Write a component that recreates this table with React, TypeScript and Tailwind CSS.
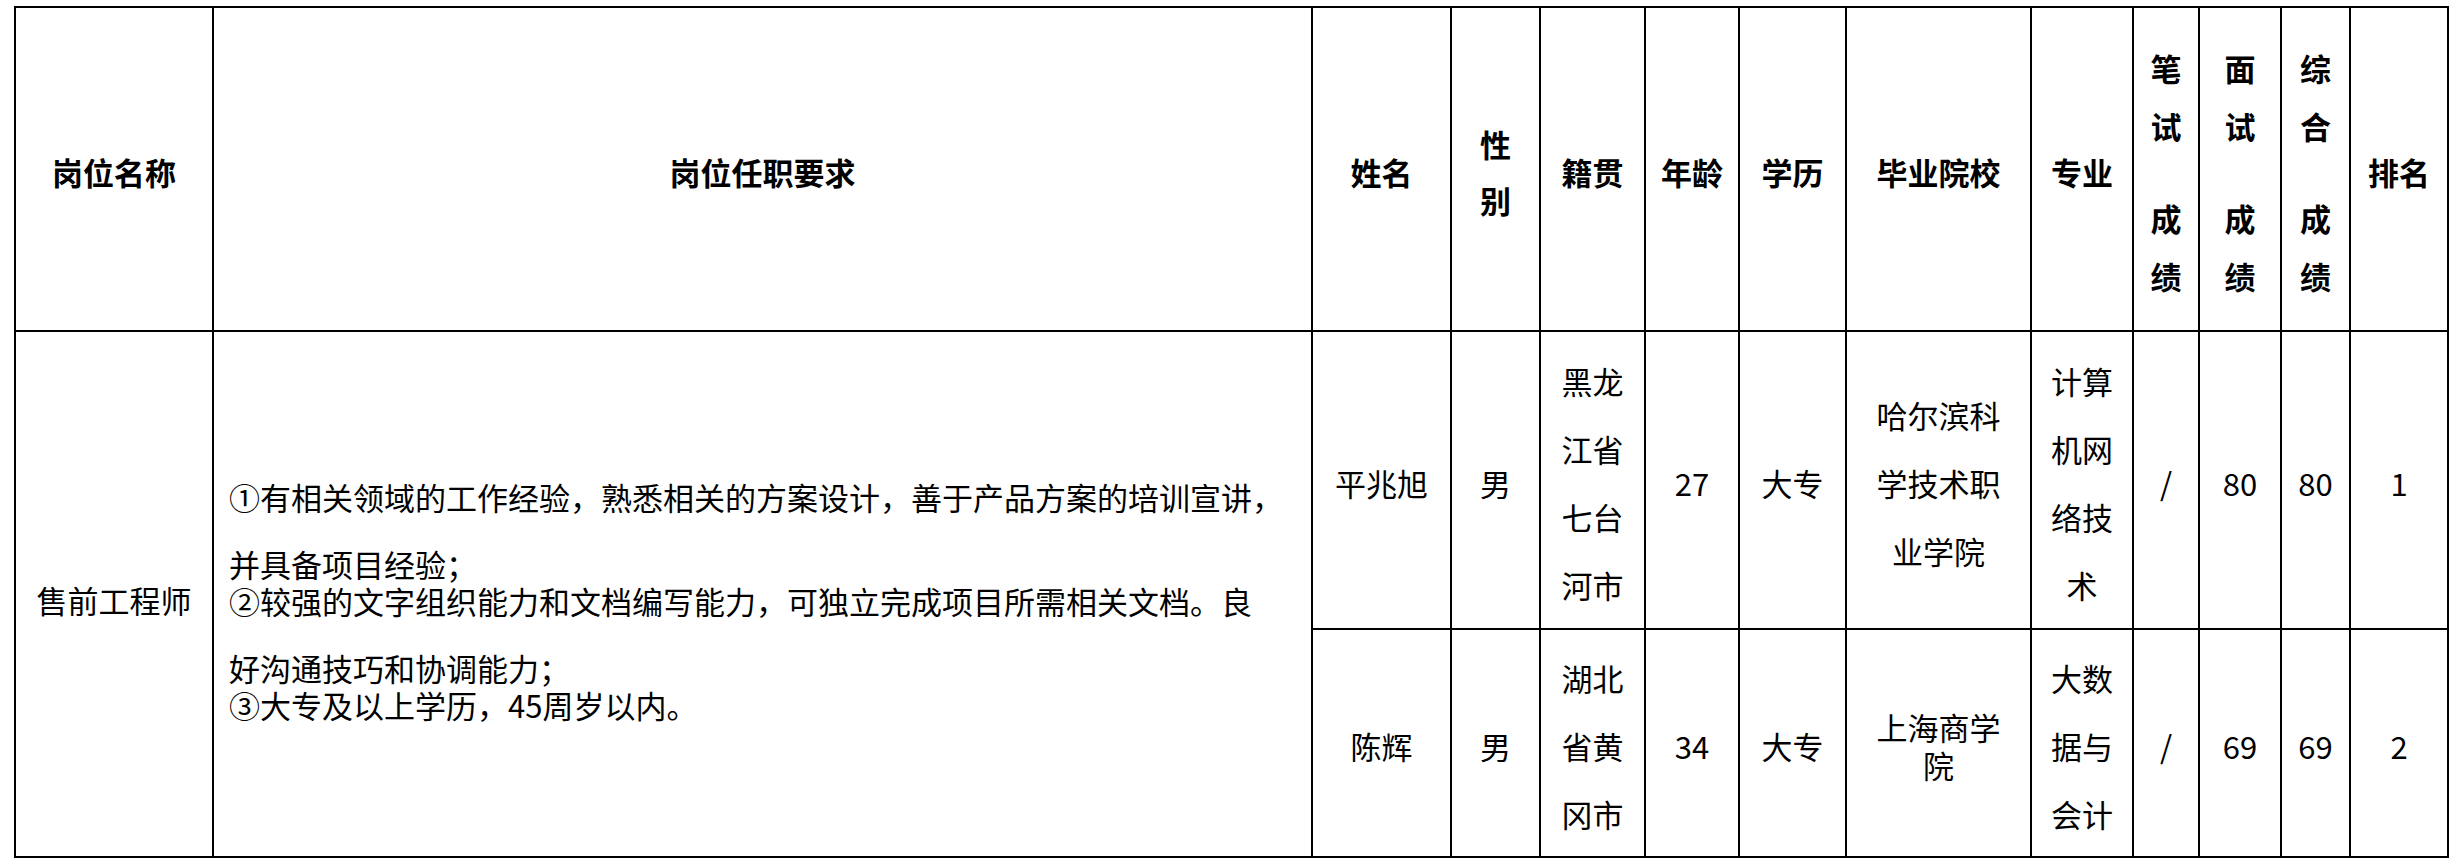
type Line = { text: string; gap?: number };

const GAP_CLASS: Record<number, string> = {
  30: "mt-[30px]",
  34: "mt-[34px]",
};

function Stack({ lines, leading }: { lines: Line[]; leading: string }) {
  return (
    <div className="flex flex-col items-center">
      {lines.map((l, i) => (
        <div key={i} className={`${leading} whitespace-nowrap ${l.gap ? GAP_CLASS[l.gap] : ""}`}>
          {l.text}
        </div>
      ))}
    </div>
  );
}

function Cell({ children, className = "" }: { children: React.ReactNode; className?: string }) {
  return (
    <div className={`flex flex-col items-center justify-center bg-white pt-[6px] text-center ${className}`}>
      {children}
    </div>
  );
}

const head = (t: string) => <div className="leading-[40px] whitespace-nowrap">{t}</div>;

const scoreHead = (a: string, b: string) => (
  <Stack
    leading="leading-[58px]"
    lines={[{ text: a[0] }, { text: a[1] }, { text: b[0], gap: 34 }, { text: b[1] }]}
  />
);

const people = [
  {
    name: "平兆旭",
    sex: "男",
    origin: ["黑龙", "江省", "七台", "河市"],
    age: "27",
    edu: "大专",
    school: ["哈尔滨科", "学技术职", "业学院"],
    schoolLeading: "leading-[68px]",
    major: ["计算", "机网", "络技", "术"],
    written: "/",
    interview: "80",
    total: "80",
    rank: "1",
  },
  {
    name: "陈辉",
    sex: "男",
    origin: ["湖北", "省黄", "冈市"],
    age: "34",
    edu: "大专",
    school: ["上海商学", "院"],
    schoolLeading: "leading-[38px]",
    major: ["大数", "据与", "会计"],
    written: "/",
    interview: "69",
    total: "69",
    rank: "2",
  },
];

export default function App() {
  return (
    <div className="h-[864px] w-[2453px] bg-white pl-[14px] pt-[6px] font-['Noto_Sans_CJK_SC','Liberation_Sans',sans-serif] text-[31px] text-black">
      <div className="grid w-max grid-cols-[196px_1097px_137px_87px_103px_92px_105px_183px_100px_64px_80px_67px_96px] grid-rows-[322px_296px_226px] gap-[2px] bg-black p-[2px]">
        {/* header */}
        <Cell className="font-bold">{head("岗位名称")}</Cell>
        <Cell className="font-bold">{head("岗位任职要求")}</Cell>
        <Cell className="font-bold">{head("姓名")}</Cell>
        <Cell className="font-bold">
          <Stack leading="leading-[56px]" lines={[{ text: "性" }, { text: "别" }]} />
        </Cell>
        <Cell className="font-bold">{head("籍贯")}</Cell>
        <Cell className="font-bold">{head("年龄")}</Cell>
        <Cell className="font-bold">{head("学历")}</Cell>
        <Cell className="font-bold">{head("毕业院校")}</Cell>
        <Cell className="font-bold">{head("专业")}</Cell>
        <Cell className="font-bold">{scoreHead("笔试", "成绩")}</Cell>
        <Cell className="font-bold">{scoreHead("面试", "成绩")}</Cell>
        <Cell className="font-bold">{scoreHead("综合", "成绩")}</Cell>
        <Cell className="font-bold">{head("排名")}</Cell>

        {/* job cells span both candidate rows */}
        <Cell className="row-span-2 pt-[12px]">{head("售前工程师")}</Cell>
        <div className="row-span-2 flex flex-col justify-center bg-white pl-[15px] pt-[12px]">
          {[
            { text: "①有相关领域的工作经验，熟悉相关的方案设计，善于产品方案的培训宣讲，" },
            { text: "并具备项目经验；", gap: 30 },
            { text: "②较强的文字组织能力和文档编写能力，可独立完成项目所需相关文档。良" },
            { text: "好沟通技巧和协调能力；", gap: 30 },
            { text: "③大专及以上学历，45周岁以内。" },
          ].map((l, i) => (
            <div key={i} className={`whitespace-nowrap leading-[37px] ${l.gap ? GAP_CLASS[l.gap] : ""}`}>
              {l.text}
            </div>
          ))}
        </div>

        {people.map((p) => (
          <>
            <Cell key={p.name + "n"}>{head(p.name)}</Cell>
            <Cell>{head(p.sex)}</Cell>
            <Cell>
              <Stack leading="leading-[68px]" lines={p.origin.map((t) => ({ text: t }))} />
            </Cell>
            <Cell>{head(p.age)}</Cell>
            <Cell>{head(p.edu)}</Cell>
            <Cell>
              <Stack leading={p.schoolLeading} lines={p.school.map((t) => ({ text: t }))} />
            </Cell>
            <Cell>
              <Stack leading="leading-[68px]" lines={p.major.map((t) => ({ text: t }))} />
            </Cell>
            <Cell>{head(p.written)}</Cell>
            <Cell>{head(p.interview)}</Cell>
            <Cell>{head(p.total)}</Cell>
            <Cell>{head(p.rank)}</Cell>
          </>
        ))}
      </div>
    </div>
  );
}
